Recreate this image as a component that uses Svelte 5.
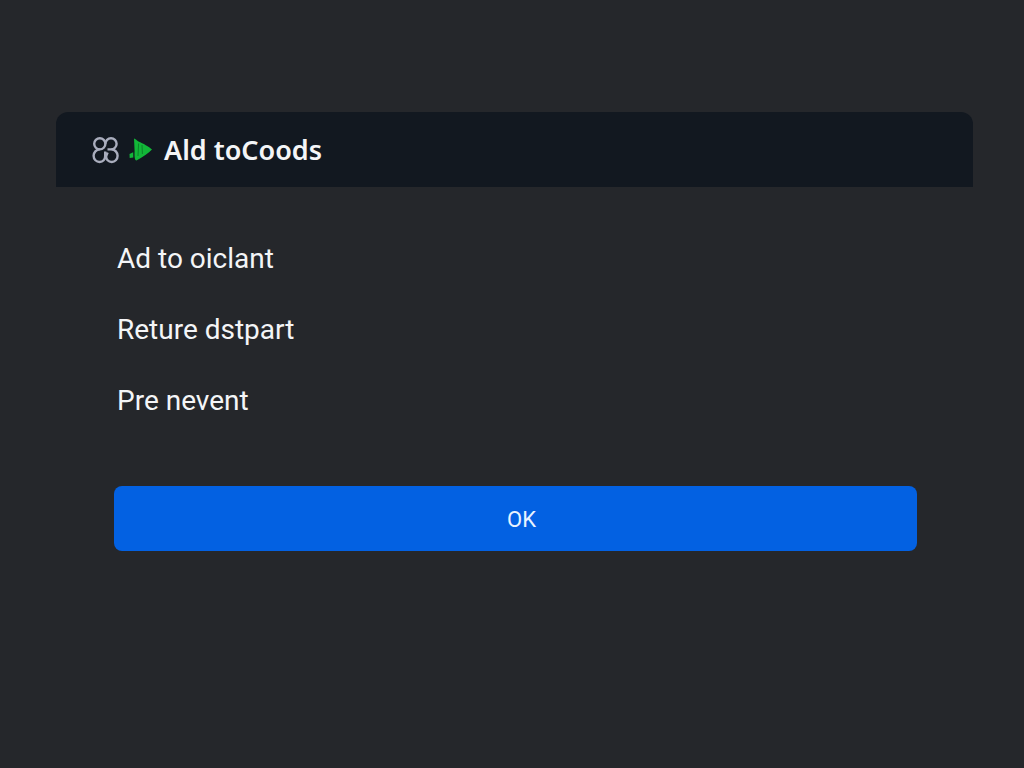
<script lang="ts">
  interface Props {
    title?: string;
    items?: string[];
    onConfirm?: () => void;
  }

  let {
    title = 'Ald toCoods',
    items = ['Ad to oiclant', 'Reture dstpart', 'Pre nevent'],
    onConfirm = () => {}
  }: Props = $props();
</script>

<main class="page">
  <div class="dialog" role="dialog" aria-labelledby="dialog-title">
    <header class="header">
      <svg class="clover" viewBox="0 0 28 28" aria-hidden="true">
        <circle cx="7.8" cy="7.8" r="5.6" />
        <path d="M13.4 7.8A5.6 5.6 0 1 1 19 13.4H15.5" />
        <path d="M7.8 13.4C4.2 13.4 1.6 16.4 1.6 19.8C1.6 23.4 4.4 26 7.6 26C11 26 13.2 23.4 13.2 20V15.5" />
        <path d="M19.4 13.4C23 13.4 25.6 16.4 25.6 19.8C25.6 23.4 22.8 26 19.8 26C16.4 26 13.8 23.4 14.2 20L15.6 16.5" />
      </svg>
      <svg class="play" viewBox="0 0 24 24" aria-hidden="true">
        <path d="M5 0.5C6.5 1 8 2.5 9.5 3.5C14 5.5 20 8.5 23 11.5C19.5 15 14 19 7.5 22.5C5.5 22.3 5.4 18 5.6 13Z" />
        <path d="M0.5 16L4.2 14.2L4.3 19.5L0.7 20Z" />
        <path class="crease" d="M9.6 5.5L9 18M13 7L13.4 16" />
      </svg>
      <h1 id="dialog-title" class="title">{title}</h1>
    </header>

    <div class="body">
      <ul class="items">
        {#each items as item}
          <li>{item}</li>
        {/each}
      </ul>
      <button type="button" class="ok" onclick={onConfirm}>OK</button>
    </div>
  </div>
</main>

<style>
  :global(body) {
    margin: 0;
    background: #25272b;
  }

  .page {
    padding: 112px 51px 0 56px;
    color: #f4f5f7;
    font-family: Roboto, "Liberation Sans", sans-serif;
  }

  .header {
    display: flex;
    align-items: center;
    height: 75px;
    padding: 0 36px;
    border-radius: 12px 12px 0 0;
    background: #121820;
  }

  .clover {
    width: 28px;
    height: 28px;
    fill: none;
    stroke: #a9adbd;
    stroke-width: 2.4;
  }

  .play {
    width: 24px;
    height: 24px;
    margin: 0 11px 0 9px;
    fill: #12b638;
  }

  .crease {
    fill: none;
    stroke: #0a8428;
    stroke-width: 1;
  }

  .title {
    margin: 0;
    font-family: "Noto Sans", "Open Sans", sans-serif;
    font-size: 27px;
    font-weight: 600;
    line-height: 36px;
  }

  .body {
    padding: 54px 56px 0 58px;
  }

  .items {
    display: flex;
    flex-direction: column;
    gap: 35px;
    margin: 0;
    padding: 0 3px;
    list-style: none;
    font-size: 28px;
    line-height: 36px;
  }

  .ok {
    display: block;
    width: 100%;
    height: 65px;
    margin-top: 67px;
    padding: 2px 0 0 12px;
    border: 0;
    border-radius: 8px;
    background: #0361e2;
    color: #e8f3ff;
    font-family: inherit;
    font-size: 22px;
    cursor: pointer;
  }
</style>
